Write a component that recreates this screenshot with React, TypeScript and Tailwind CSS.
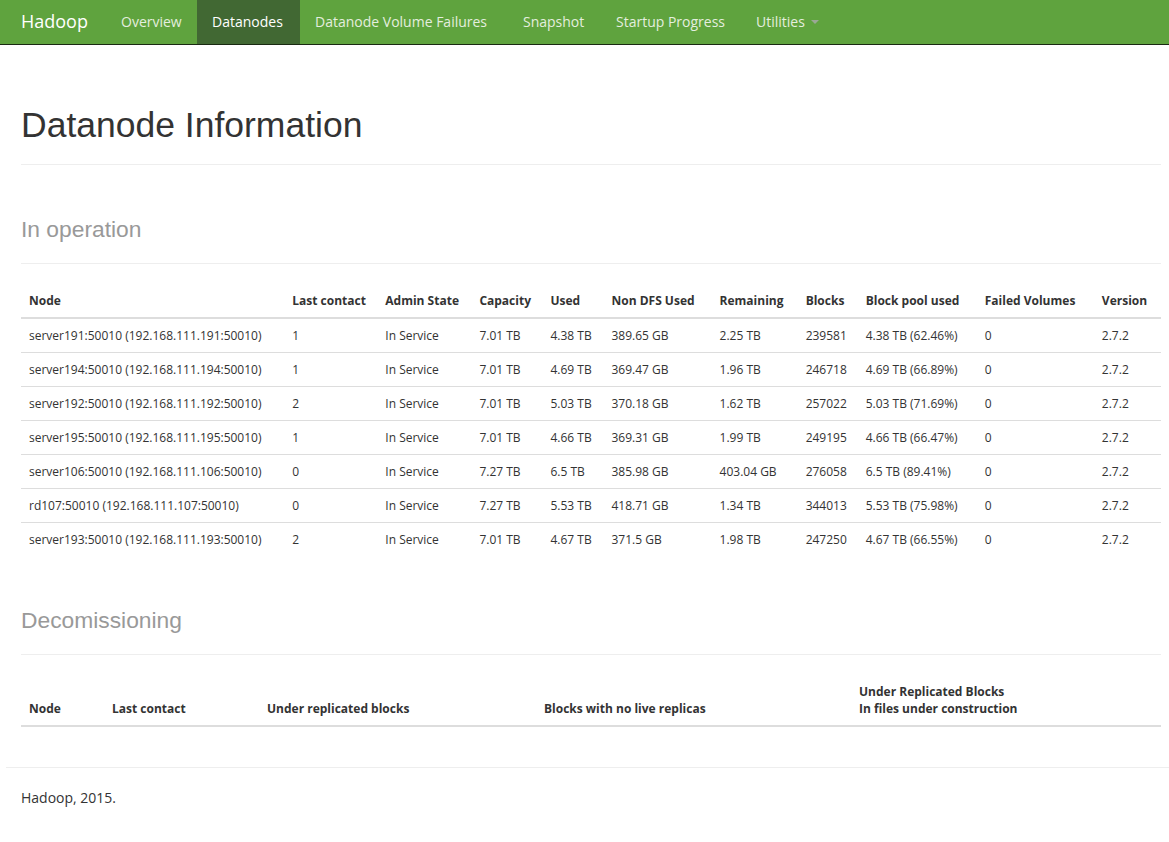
import React from 'react';

const navItems = [
  { label: 'Overview', width: 'w-[91px]' },
  { label: 'Datanodes', width: 'w-[103px]', active: true },
  { label: 'Datanode Volume Failures', width: 'w-[208px]' },
  { label: 'Snapshot', width: 'w-[93px]' },
  { label: 'Startup Progress', width: 'w-[140px]' },
];

const nodes = [
  ['server191:50010 (192.168.111.191:50010)', '1', 'In Service', '7.01 TB', '4.38 TB', '389.65 GB', '2.25 TB', '239581', '4.38 TB (62.46%)', '0', '2.7.2'],
  ['server194:50010 (192.168.111.194:50010)', '1', 'In Service', '7.01 TB', '4.69 TB', '369.47 GB', '1.96 TB', '246718', '4.69 TB (66.89%)', '0', '2.7.2'],
  ['server192:50010 (192.168.111.192:50010)', '2', 'In Service', '7.01 TB', '5.03 TB', '370.18 GB', '1.62 TB', '257022', '5.03 TB (71.69%)', '0', '2.7.2'],
  ['server195:50010 (192.168.111.195:50010)', '1', 'In Service', '7.01 TB', '4.66 TB', '369.31 GB', '1.99 TB', '249195', '4.66 TB (66.47%)', '0', '2.7.2'],
  ['server106:50010 (192.168.111.106:50010)', '0', 'In Service', '7.27 TB', '6.5 TB', '385.98 GB', '403.04 GB', '276058', '6.5 TB (89.41%)', '0', '2.7.2'],
  ['rd107:50010 (192.168.111.107:50010)', '0', 'In Service', '7.27 TB', '5.53 TB', '418.71 GB', '1.34 TB', '344013', '5.53 TB (75.98%)', '0', '2.7.2'],
  ['server193:50010 (192.168.111.193:50010)', '2', 'In Service', '7.01 TB', '4.67 TB', '371.5 GB', '1.98 TB', '247250', '4.67 TB (66.55%)', '0', '2.7.2'],
];

const opHeaders = ['Node', 'Last contact', 'Admin State', 'Capacity', 'Used', 'Non DFS Used', 'Remaining', 'Blocks', 'Block pool used', 'Failed Volumes', 'Version'];
const opWidths = ['w-[263px]', 'w-[93px]', 'w-[94px]', 'w-[71px]', 'w-[61px]', 'w-[108px]', 'w-[86px]', 'w-[60px]', 'w-[119px]', 'w-[117px]', 'w-[67px]'];

const SectionHeader = ({ title, mt }: { title: string; mt: string }) => (
  <div className={`${mt} pt-[4px] pb-[14px] border-b border-[#eee] font-['Liberation_Sans',Arial,sans-serif]`}>
    <h2 className="text-[22.8px] leading-[40px] text-[#999]">{title}</h2>
  </div>
);

export default function App() {
  return (
    <div className="min-h-[842px] bg-white overflow-hidden text-[#333] font-['Open_Sans','Noto_Sans',sans-serif]">
      <nav className="h-[45px] bg-[#5fa33e] border-b border-[#1a2a12] flex items-stretch">
        <div className="pl-[21px] w-[106px] pb-[2px] flex items-center text-[18px] text-white">Hadoop</div>
        {navItems.map((n) => (
          <div
            key={n.label}
            className={`${n.width} px-[15px] pb-[2px] flex items-center whitespace-nowrap text-[14px] ${
              n.active ? 'bg-[#416833] text-white' : 'text-[#e4eedf]'
            }`}
          >
            {n.label}
          </div>
        ))}
        <div className="px-[15px] pb-[2px] flex items-center whitespace-nowrap text-[14px] text-[#e4eedf]">
          Utilities
          <span className="ml-[6px] mt-[2px] inline-block w-0 h-0 border-l-[4px] border-r-[4px] border-t-[4px] border-l-transparent border-r-transparent border-t-[#9aa894]" />
        </div>
      </nav>

      <div className="ml-[6px] w-[1170px] px-[15px]">
        <div className="mt-[60px] pb-[19px] border-b border-[#eee] font-['Liberation_Sans',Arial,sans-serif]">
          <h1 className="text-[35.5px] leading-[40px] text-[#333]">Datanode Information</h1>
        </div>

        <SectionHeader title="In operation" mt="mt-[40px]" />

        <table className="mt-[20px] w-[1140px] table-fixed border-collapse text-[12px] leading-[17px]">
          <colgroup>
            {opWidths.map((w, i) => (
              <col key={i} className={w} />
            ))}
          </colgroup>
          <thead>
            <tr className="border-b-2 border-[#ddd]">
              {opHeaders.map((h) => (
                <th key={h} className="p-[8px] text-left font-bold align-bottom whitespace-nowrap">
                  {h}
                </th>
              ))}
            </tr>
          </thead>
          <tbody>
            {nodes.map((row, r) => (
              <tr key={r} className={r > 0 ? 'border-t border-[#ddd]' : ''}>
                {row.map((c, i) => (
                  <td key={i} className="p-[8px] whitespace-nowrap">
                    {c}
                  </td>
                ))}
              </tr>
            ))}
          </tbody>
        </table>

        <SectionHeader title="Decomissioning" mt="mt-[40px]" />

        <table className="mt-[20px] w-[1140px] table-fixed border-collapse text-[12px] leading-[17px]">
          <colgroup>
            <col className="w-[83px]" />
            <col className="w-[155px]" />
            <col className="w-[277px]" />
            <col className="w-[315px]" />
            <col className="w-[310px]" />
          </colgroup>
          <thead>
            <tr className="border-b-2 border-[#ddd]">
              <th className="p-[8px] text-left font-bold align-bottom">Node</th>
              <th className="p-[8px] text-left font-bold align-bottom">Last contact</th>
              <th className="p-[8px] text-left font-bold align-bottom">Under replicated blocks</th>
              <th className="p-[8px] text-left font-bold align-bottom">Blocks with no live replicas</th>
              <th className="p-[8px] text-left font-bold align-bottom">
                Under Replicated Blocks
                <br />
                In files under construction
              </th>
            </tr>
          </thead>
          <tbody />
        </table>

        <div className="mt-[40px] -mx-[15px] border-t border-[#eee]" />
        <p className="mt-[20px] text-[14px] leading-[20px]">Hadoop, 2015.</p>
      </div>
    </div>
  );
}
